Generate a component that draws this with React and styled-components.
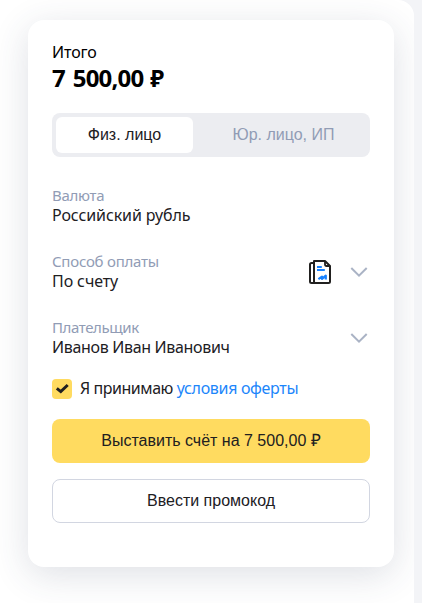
import React from "react";
import styled, { createGlobalStyle } from "styled-components";

const Global = createGlobalStyle`
  *, *::before, *::after { box-sizing: border-box; }
  body { margin: 0; background: #f3f4f7; font-family: "Noto Sans", sans-serif; color: #21201f; overflow: hidden; }
  button { font-family: "Liberation Sans", Arial, sans-serif; font-size: 16px; color: #21201f; padding: 0; cursor: pointer; }
`;

const Page = styled.main`
  width: 414px;
  height: 603px;
  padding: 20px 20px 0 28px;
  background: #fff;
  border-radius: 0 16px 0 0;
  overflow: hidden;
`;

const Card = styled.section`
  width: 366px;
  height: 547px;
  padding: 22px 24px 0;
  display: flex;
  flex-direction: column;
  background: #fff;
  border-radius: 16px;
  box-shadow: 0 8px 36px rgba(50, 62, 95, 0.16);
`;

const TotalLabel = styled.div`
  font-size: 16px;
  line-height: 20px;
  letter-spacing: -0.1px;
  color: #000;
`;

const TotalSum = styled.div`
  font-size: 24px;
  line-height: 28px;
  margin-top: 2px;
  font-weight: 700;
  letter-spacing: -0.8px;
  word-spacing: 2.4px;
  color: #000;
  white-space: nowrap;
`;

const Currency = styled.span`
  margin-left: -1px;
  font-size: 23px;
`;

const Tabs = styled.div`
  display: flex;
  height: 44px;
  margin-top: 21px;
  padding: 4px;
  background: #ecedf1;
  border-radius: 8px;
`;

const Tab = styled.button`
  flex: ${(p) => (p.$active ? "0 0 137px" : "1")};
  height: 36px;
  padding-left: ${(p) => (p.$active ? 0 : 8)}px;
  border: 0;
  border-radius: 6px;
  background: ${(p) => (p.$active ? "#fff" : "transparent")};
  && { color: ${(p) => (p.$active ? "#21201f" : "#919cb5")}; }
`;

const Fields = styled.div`
  display: flex;
  flex-direction: column;
  gap: 26px;
  margin-top: 29px;
`;

const Field = styled.div`
  display: flex;
  align-items: center;
  justify-content: space-between;
  height: 40px;
`;

const Label = styled.div`
  font-size: 15px;
  line-height: 16px;
  margin-bottom: 2px;
  letter-spacing: ${(p) => p.$spacing || 0}px;
  color: #919cb5;
`;

const Value = styled.div`
  font-size: 16px;
  line-height: 20px;
  letter-spacing: ${(p) => p.$spacing || 0}px;
`;

const Icons = styled.div`
  display: flex;
  align-items: center;
  gap: 18px;
  padding-right: 2px;
  svg { display: block; }
`;

const Agreement = styled.div`
  display: flex;
  align-items: flex-start;
  gap: 8px;
  height: 20px;
  margin-top: 21px;
  font-size: 16px;
  line-height: 18px;
  letter-spacing: -0.45px;
  white-space: nowrap;
`;

const Checkbox = styled.span`
  display: flex;
  width: 20px;
  height: 20px;
  border-radius: 4px;
  background: #ffdb60;
`;

const Link = styled.a`
  color: #1c86fb;
  letter-spacing: -0.32px;
`;

const Action = styled.button`
  height: 44px;
  flex: none;
  margin-top: ${(p) => (p.$primary ? 20 : 16)}px;
  border: ${(p) => (p.$primary ? "0" : "1px solid #d2d6e1")};
  border-radius: 8px;
  background: ${(p) => (p.$primary ? "#ffdb60" : "#fff")};
`;

const ButtonCurrency = styled.span`
  font-size: 17px;
  line-height: 1;
`;

const Chevron = () => (
  <svg width="18" height="12" viewBox="0 0 18 12" fill="none" stroke="#aab3c5" strokeWidth="2">
    <path d="M1.3 2 9 9.6 16.7 2" />
  </svg>
);

const InvoiceIcon = () => (
  <svg width="24" height="26" viewBox="0 0 24 26" fill="none" stroke="#21201f" strokeWidth="2" strokeLinejoin="round">
    <path d="M6 2H17L22 7V22.5Q22 24 20.5 24H7.5Q6 24 6 22.5Z" />
    <path d="M6 4H3.5Q2 4 2 5.5V22.5Q2 24 3.5 24H7.5" />
    <path d="M17 2V5.5Q17 7 18.5 7H22" strokeWidth="1.8" />
    <g stroke="#1882ff">
      <path d="M9 8H13.8M9 11H16.8" />
      <path d="M10.4 20.2 14 17.7V19.9L17.8 16.6V20.5" strokeWidth="2.2" />
    </g>
  </svg>
);

export default function App() {
  return (
    <>
      <Global />
      <Page>
        <Card>
          <TotalLabel>Итого</TotalLabel>
          <TotalSum>7 500,00 <Currency>₽</Currency></TotalSum>
          <Tabs>
            <Tab $active>Физ. лицо</Tab>
            <Tab>Юр. лицо, ИП</Tab>
          </Tabs>
          <Fields>
            <Field>
              <div>
                <Label $spacing={-0.3}>Валюта</Label>
                <Value $spacing={-0.1}>Российский рубль</Value>
              </div>
            </Field>
            <Field>
              <div>
                <Label $spacing={-0.23}>Способ оплаты</Label>
                <Value $spacing={-0.1}>По счету</Value>
              </div>
              <Icons>
                <InvoiceIcon />
                <Chevron />
              </Icons>
            </Field>
            <Field>
              <div>
                <Label $spacing={-0.4}>Плательщик</Label>
                <Value $spacing={-0.33}>Иванов Иван Иванович</Value>
              </div>
              <Icons>
                <Chevron />
              </Icons>
            </Field>
          </Fields>
          <Agreement>
            <Checkbox>
              <svg width="20" height="20" viewBox="0 0 20 20" fill="none" stroke="#21201f" strokeWidth="3">
                <path d="M4.8 9.3 8.8 12.6 15.7 6" />
              </svg>
            </Checkbox>
            <span>Я принимаю <Link>условия оферты</Link></span>
          </Agreement>
          <Action $primary>Выставить счёт на 7 500,00 <ButtonCurrency>₽</ButtonCurrency></Action>
          <Action>Ввести промокод</Action>
        </Card>
      </Page>
    </>
  );
}
